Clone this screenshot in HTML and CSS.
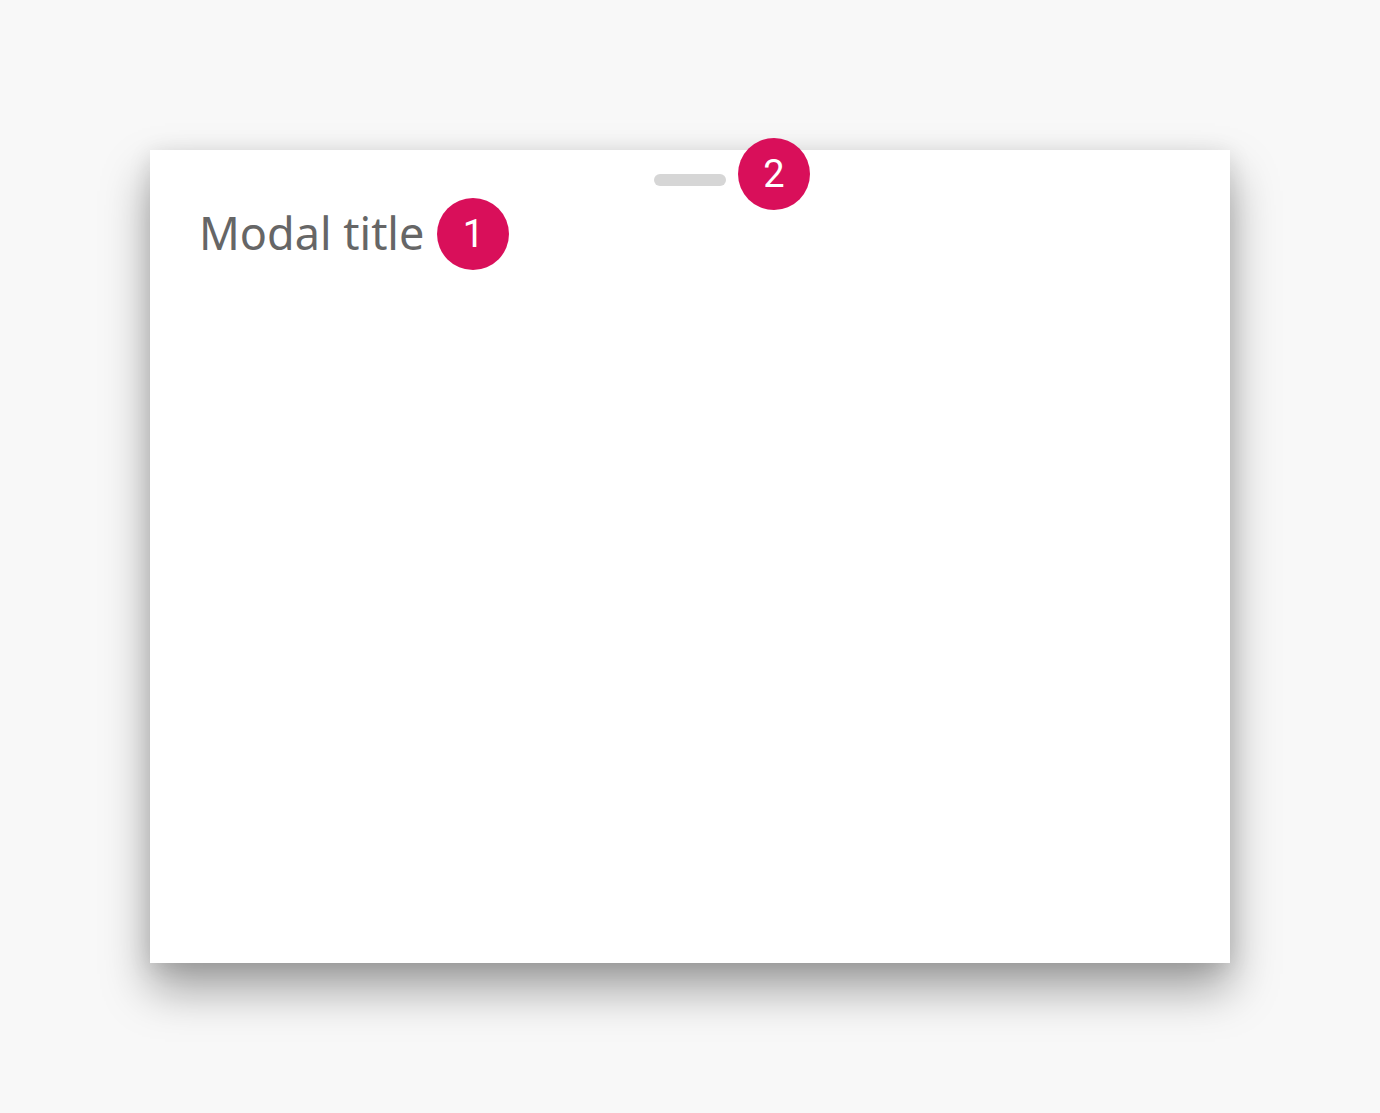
FILE: index.html
```html
<!DOCTYPE html>
<html lang="en">
<head>
<meta charset="utf-8">
<title>Modal</title>
<link rel="stylesheet" href="styles.css">
</head>
<body>
<div class="stage">
  <div class="modal">
    <div class="handle-row">
      <div class="handle">
        <span class="badge badge-handle">2</span>
      </div>
    </div>
    <div class="title-row">
      <h1 class="title">Modal title</h1>
      <span class="badge">1</span>
    </div>
  </div>
</div>
</body>
</html>
```
FILE: styles.css
```css
html, body {
  margin: 0;
  padding: 0;
  background: #f8f8f8;
}
.stage {
  padding: 150px;
}
.modal {
  width: 1080px;
  height: 813px;
  background: #ffffff;
  box-shadow: 0 26px 44px rgba(0, 0, 0, 0.36), 0 4px 22px rgba(0, 0, 0, 0.1);
  box-sizing: border-box;
  padding: 24px 50px 0 49px;
}
.handle-row {
  display: flex;
  justify-content: center;
  padding-left: 1px;
}
.handle {
  position: relative;
  width: 72px;
  height: 12px;
  border-radius: 6px;
  background: #d6d6d6;
}
.badge {
  display: flex;
  align-items: center;
  justify-content: center;
  width: 72px;
  height: 72px;
  border-radius: 50%;
  background: #d90f5a;
  color: #ffffff;
  font-family: Roboto, "Liberation Sans", sans-serif;
  font-weight: 400;
  font-size: 38px;
  flex: none;
}
.badge-handle {
  position: absolute;
  left: 84px;
  top: -36px;
}
.title-row {
  display: flex;
  align-items: center;
  gap: 13px;
  margin-top: 12px;
}
.title {
  margin: 0;
  font-family: "Noto Sans", sans-serif;
  font-weight: 400;
  font-size: 45px;
  color: #666666;
  line-height: 1;
  position: relative;
  top: -2px;
}
```
